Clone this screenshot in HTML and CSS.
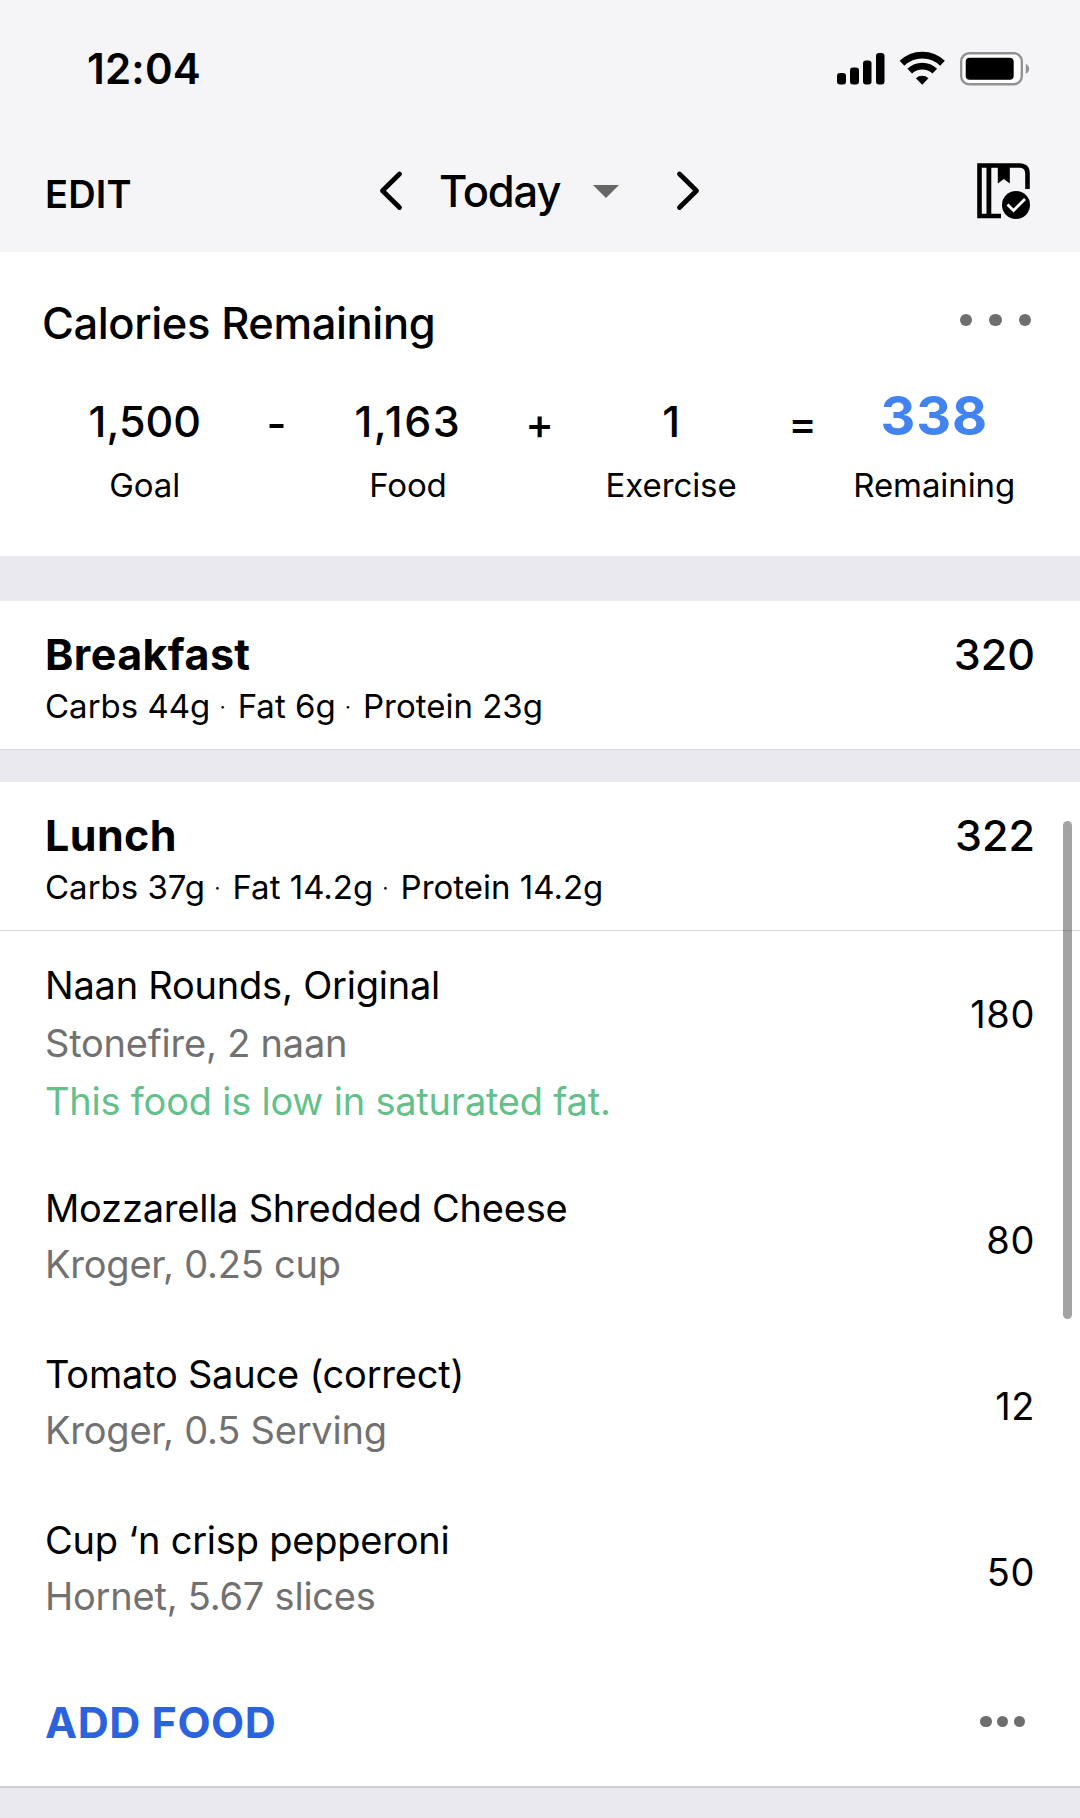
FILE: index.html
```html
<!DOCTYPE html>
<html lang="en">
<head>
    <meta charset="UTF-8">
    <meta name="viewport" content="width=device-width, initial-scale=1.0">
    <title>Food Diary</title>
    <link rel="stylesheet" href="styles.css">
</head>
<body>
    <header>
        <div class="status-bar">
            <span class="time">12:04</span>
            <svg class="status-icons" width="194" height="36" viewBox="0 0 194 36">
                <rect x="0" y="22" width="9" height="11.5" rx="3"/>
                <rect x="13" y="16.500" width="9" height="17" rx="3"/>
                <rect x="26" y="9.500" width="8.500" height="24" rx="3"/>
                <rect x="39" y="2" width="8.500" height="31.500" rx="3"/>
                <g fill="none" stroke="#000">
                    <path d="M65 12.300a29 29 0 0 1 40.500 0" stroke-width="6.800"/>
                    <path d="M72.700 20.200a18 18 0 0 1 25.100 0" stroke-width="6.600"/>
                </g>
                <path d="M85.200 33.800L78.900 27.200a9.500 9.500 0 0 1 12.600 0z"/>
                <rect x="124.200" y="2.200" width="60.600" height="31" rx="8" fill="#fff" stroke="#929294" stroke-width="2.400"/>
                <rect x="128.700" y="6.700" width="48" height="22" rx="4"/>
                <path d="M188.800 13c4.500 1.500 4.500 8.300 0 9.800z" fill="#929294"/>
            </svg>
        </div>
        <nav class="nav-bar">
            <a class="edit">EDIT</a>
            <div class="day-picker">
                <svg width="26" height="42" viewBox="0 0 26 42"><path d="M21.500 4L4.500 20.700L21.500 37.500"/></svg>
                <span class="day">Today</span>
                <span class="caret"></span>
                <svg width="26" height="42" viewBox="0 0 26 42"><path d="M4.500 4L21.500 20.700L4.500 37.500"/></svg>
            </div>
            <svg class="book" width="54" height="58" viewBox="0 0 54 58">
                <path d="M50.500 27V11.500Q50.500 3.500 42.500 3.500H2.500V54H24" fill="none" stroke="#000" stroke-width="4.600"/>
                <path d="M9.500 3h4.800v50H9.500zM20.800 3h12v18.500l-6-4.500l-6 4.500z"/>
                <circle cx="39" cy="43" r="17" fill="#f5f5f7"/>
                <circle cx="39" cy="43" r="14"/>
                <path d="M30.500 42.500L36.500 48.500L48 37" fill="none" stroke="#fff" stroke-width="2.800"/>
            </svg>
        </nav>
    </header>

    <section class="summary">
        <div class="summary-head">
            <h1>Calories Remaining</h1>
            <div class="dots"><i></i><i></i><i></i></div>
        </div>
        <div class="equation">
            <div class="part"><b>1,500</b><span>Goal</span></div>
            <div class="part"><b class="sign">-</b></div>
            <div class="part"><b class="eaten">1,163</b><span>Food</span></div>
            <div class="part"><b class="sign">+</b></div>
            <div class="part"><b>1</b><span>Exercise</span></div>
            <div class="part"><b class="sign">=</b></div>
            <div class="part"><b class="total">338</b><span>Remaining</span></div>
        </div>
    </section>

    <section class="meal">
        <div class="meal-head">
            <h2>Breakfast</h2>
            <span class="meal-total">320</span>
            <p class="macros">Carbs 44g <i>·</i> Fat 6g <i>·</i> Protein 23g</p>
        </div>
    </section>

    <section class="meal lunch">
        <div class="meal-head">
            <h2>Lunch</h2>
            <span class="meal-total">322</span>
            <p class="macros">Carbs 37g <i>·</i> Fat 14.2g <i>·</i> Protein 14.2g</p>
        </div>
        <ul class="foods">
            <li class="tall">
                <div>
                    <p class="name">Naan Rounds, Original</p>
                    <p class="serving">Stonefire, 2 naan</p>
                    <p class="note">This food is low in saturated fat.</p>
                </div>
                <span class="cals">180</span>
            </li>
            <li>
                <div>
                    <p class="name">Mozzarella Shredded Cheese</p>
                    <p class="serving">Kroger, 0.25 cup</p>
                </div>
                <span class="cals">80</span>
            </li>
            <li>
                <div>
                    <p class="name">Tomato Sauce (correct)</p>
                    <p class="serving">Kroger, 0.5 Serving</p>
                </div>
                <span class="cals">12</span>
            </li>
            <li>
                <div>
                    <p class="name">Cup ‘n crisp pepperoni</p>
                    <p class="serving">Hornet, 5.67 slices</p>
                </div>
                <span class="cals">50</span>
            </li>
        </ul>
        <div class="meal-foot">
            <a class="add">ADD FOOD</a>
            <div class="dots small"><i></i><i></i><i></i></div>
        </div>
    </section>
    <div class="scrollbar"></div>
</body>
</html>
```
FILE: styles.css
```css
* {
    box-sizing: border-box;
    margin: 0;
    padding: 0;
}

body {
    position: relative;
    height: 1818px;
    overflow: hidden;
    background-color: #e9e9ee;
    color: #000;
    font-family: Inter, "Liberation Sans", sans-serif;
    white-space: nowrap;
}

header {
    height: 252px;
    background-color: #f5f5f7;
}

.status-bar {
    display: flex;
    justify-content: space-between;
    align-items: center;
    height: 137px;
    padding: 0 49px 0 87px;
}

.time {
    font-size: 42px;
    font-weight: 600;
    letter-spacing: .2px;
}

.nav-bar {
    display: grid;
    grid-template-columns: 1fr auto 1fr;
    align-items: center;
    height: 115px;
    padding: 0 49px 0 45px;
}

.edit {
    padding-bottom: 2px;
    font-size: 38px;
    font-weight: 600;
    letter-spacing: .2px;
}

.day-picker {
    display: flex;
    align-items: center;
    width: 323px;
    margin-left: 3px;
    padding-bottom: 7px;
}

.day-picker path {
    fill: none;
    stroke: #000;
    stroke-width: 4.8;
    stroke-linecap: round;
    stroke-linejoin: round;
}

.day {
    width: 154px;
    margin-left: 35px;
    font-size: 43.5px;
    font-weight: 500;
    letter-spacing: -1.2px;
}

.caret {
    margin-right: auto;
    border: 13.5px solid transparent;
    border-top-color: #666;
    border-bottom: 0;
}

.book {
    justify-self: end;
    margin-bottom: 7px;
}

.summary {
    height: 304px;
    margin-bottom: 45px;
    padding-top: 41px;
    background-color: #fff;
}

.summary-head {
    display: flex;
    justify-content: space-between;
    height: 98px;
    padding: 0 49px 0 42px;
}

h1 {
    font-size: 43.5px;
    font-weight: 500;
    line-height: 60px;
    letter-spacing: -.4px;
}

.dots {
    display: flex;
    gap: 17px;
    padding-top: 21px;
}

.dots i {
    width: 12.4px;
    height: 12.4px;
    border-radius: 50%;
    background-color: #6e6e6e;
}

.equation {
    display: grid;
    grid-template-columns: repeat(7, minmax(0, 1fr));
    justify-items: center;
    padding: 0 80px 0 79px;
}

.part {
    display: flex;
    flex-direction: column;
    align-items: center;
}

.part b {
    height: 60px;
    margin-bottom: 9px;
    font-size: 43px;
    font-weight: 500;
    line-height: 61px;
}

.part .eaten {
    letter-spacing: 1.6px;
}

.part .sign {
    padding-top: 2px;
}

.part .total {
    color: #4383f0;
    font-size: 54px;
    font-weight: 700;
    line-height: 50px;
    letter-spacing: .8px;
}

.part span {
    font-size: 33px;
    line-height: 50px;
    letter-spacing: -.1px;
}

.meal {
    background-color: #fff;
}

.meal-head {
    display: grid;
    grid-template-columns: 1fr auto;
    height: 149px;
    padding: 27px 45px 0;
    align-content: start;
    border-bottom: 1px solid #d9d9dc;
}

h2 {
    font-size: 43px;
    font-weight: 700;
    line-height: 52px;
    letter-spacing: .4px;
}

.meal-total {
    font-size: 43px;
    font-weight: 500;
    line-height: 52px;
}

.macros {
    font-size: 33px;
    line-height: 52px;
}

.macros i {
    margin-right: 3px;
    font-size: 20px;
    font-style: normal;
    line-height: 0;
    vertical-align: 4px;
}

.lunch {
    margin-top: 32px;
    border-bottom: 2px solid #d0d0d4;
}

.foods {
    list-style-type: none;
}

.foods li {
    display: flex;
    justify-content: space-between;
    height: 166px;
    padding: 27px 45px 0;
    font-size: 38px;
    line-height: 55.5px;
    letter-spacing: -.22px;
}

.foods .tall {
    height: 223px;
    padding-top: 25px;
    line-height: 58px;
}

.serving {
    color: #717171;
}

.note {
    color: #64c08a;
}

.cals {
    padding-top: 32px;
    letter-spacing: .6px;
}

.tall .cals {
    padding-top: 29px;
}

.meal-foot {
    display: flex;
    justify-content: space-between;
    height: 134px;
    padding: 40px 55px 0 45px;
}

.add {
    color: #2b63dc;
    font-size: 43px;
    font-weight: 700;
    line-height: 60px;
    letter-spacing: .55px;
}

.small {
    gap: 5.3px;
    padding-top: 24px;
}

.small i {
    width: 11.4px;
    height: 11.4px;
}

.scrollbar {
    position: absolute;
    top: 821px;
    right: 8px;
    width: 9px;
    height: 498px;
    border-radius: 5px;
    background-color: rgba(0, 0, 0, .36);
}
```
